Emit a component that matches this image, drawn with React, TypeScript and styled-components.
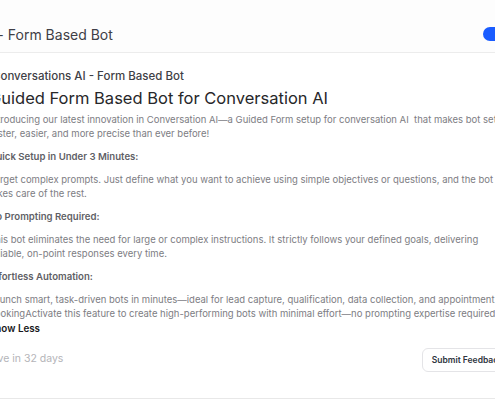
import React from 'react'
import styled, { createGlobalStyle } from 'styled-components'

const GlobalStyle = createGlobalStyle`
  html, body {
    margin: 0;
    padding: 0;
    background: #ffffff;
    overflow: hidden;
  }
  body {
    font-family: Inter, "Noto Sans", "Liberation Sans", sans-serif;
    -webkit-font-smoothing: antialiased;
  }
`

const Page = styled.div`
  width: 535px;
  margin-left: -11px;
  height: 399px;
  display: flex;
  flex-direction: column;
`

const Header = styled.header`
  box-sizing: border-box;
  height: 53px;
  padding-top: 16px;
  display: flex;
  align-items: center;
  justify-content: space-between;
  border-bottom: 1px solid #ececec;
  background: #fdfdfd;
`

const HeaderTitle = styled.div`
  display: flex;
  align-items: center;
  gap: 4px;
  margin-left: -108px;
  font-size: 14px;
  font-weight: 400;
  color: #3f3f46;
`

const Toggle = styled.div<{ on?: boolean }>`
  width: 36px;
  height: 14px;
  border-radius: 7px;
  margin-right: 5px;
  background: ${({ on }) => (on ? '#1a5cff' : '#d4d4d8')};
`

const Body = styled.section`
  flex: 1;
  padding-top: 14px;
  display: flex;
  flex-direction: column;
  border-bottom: 1px solid #e8e8e8;
`

const Eyebrow = styled.div`
  margin-left: 3px;
  font-size: 11.5px;
  font-weight: 500;
  color: #3f3f46;
  line-height: 18px;
`

const Title = styled.h1`
  margin: 2px 0 4px;
  font-size: 16.5px;
  font-weight: 400;
  color: #27272a;
  line-height: 22px;
`

const Text = styled.p`
  margin: 0 0 9px;
  padding-right: 14px;
  font-size: 9.5px;
  line-height: 14px;
  color: #7d7d83;
`

const Subhead = styled.h3`
  margin: 0 0 9px;
  font-size: 9.6px;
  line-height: 14px;
  font-weight: 600;
  color: #5f5f66;
`

const ShowLess = styled.button`
  align-self: flex-start;
  margin-top: -8px;
  padding: 0;
  border: none;
  background: none;
  font-family: inherit;
  font-size: 9.8px;
  line-height: 14px;
  font-weight: 600;
  color: #18181b;
  cursor: pointer;
`

const Footer = styled.div`
  display: flex;
  align-items: center;
  justify-content: space-between;
  margin-top: 12px;
`

const Muted = styled.span`
  margin-top: -3px;
  font-size: 10.5px;
  color: #b4b4b8;
`

const FeedbackButton = styled.button`
  height: 24px;
  margin-right: 11px;
  padding: 0 9px;
  border: 1px solid #e4e4e7;
  border-radius: 6px;
  background: #ffffff;
  font-family: inherit;
  font-size: 8.5px;
  font-weight: 600;
  color: #2e3440;
  white-space: nowrap;
`

const App = () => {
  return (
    <>
      <GlobalStyle />
      <Page>
        <Header>
          <HeaderTitle>
            <span>Conversations AI</span>
            <span>-</span>
            <span>Form Based Bot</span>
          </HeaderTitle>
          <Toggle on />
        </Header>
        <Body>
          <Eyebrow>Conversations AI - Form Based Bot</Eyebrow>
          <Title>Guided Form Based Bot for Conversation AI</Title>
          <Text>
            Introducing our latest innovation in Conversation AI—a Guided Form setup for conversation AI&nbsp; that makes bot setup
            faster, easier, and more precise than ever before!
          </Text>
          <Subhead>Quick Setup in Under 3 Minutes:</Subhead>
          <Text>
            Forget complex prompts. Just define what you want to achieve using simple objectives or questions, and the bot
            takes care of the rest.
          </Text>
          <Subhead>No Prompting Required:</Subhead>
          <Text>
            This bot eliminates the need for large or complex instructions. It strictly follows your defined goals, delivering
            reliable, on-point responses every time.
          </Text>
          <Subhead>Effortless Automation:</Subhead>
          <Text>
            Launch smart, task-driven bots in minutes—ideal for lead capture, qualification, data collection, and appointment
            bookingActivate this feature to create high-performing bots with minimal effort—no prompting expertise required.
          </Text>
          <ShowLess>Show Less</ShowLess>
          <Footer>
            <Muted>Live in 32 days</Muted>
            <FeedbackButton>Submit Feedback</FeedbackButton>
          </Footer>
        </Body>
      </Page>
    </>
  )
}

export default App
